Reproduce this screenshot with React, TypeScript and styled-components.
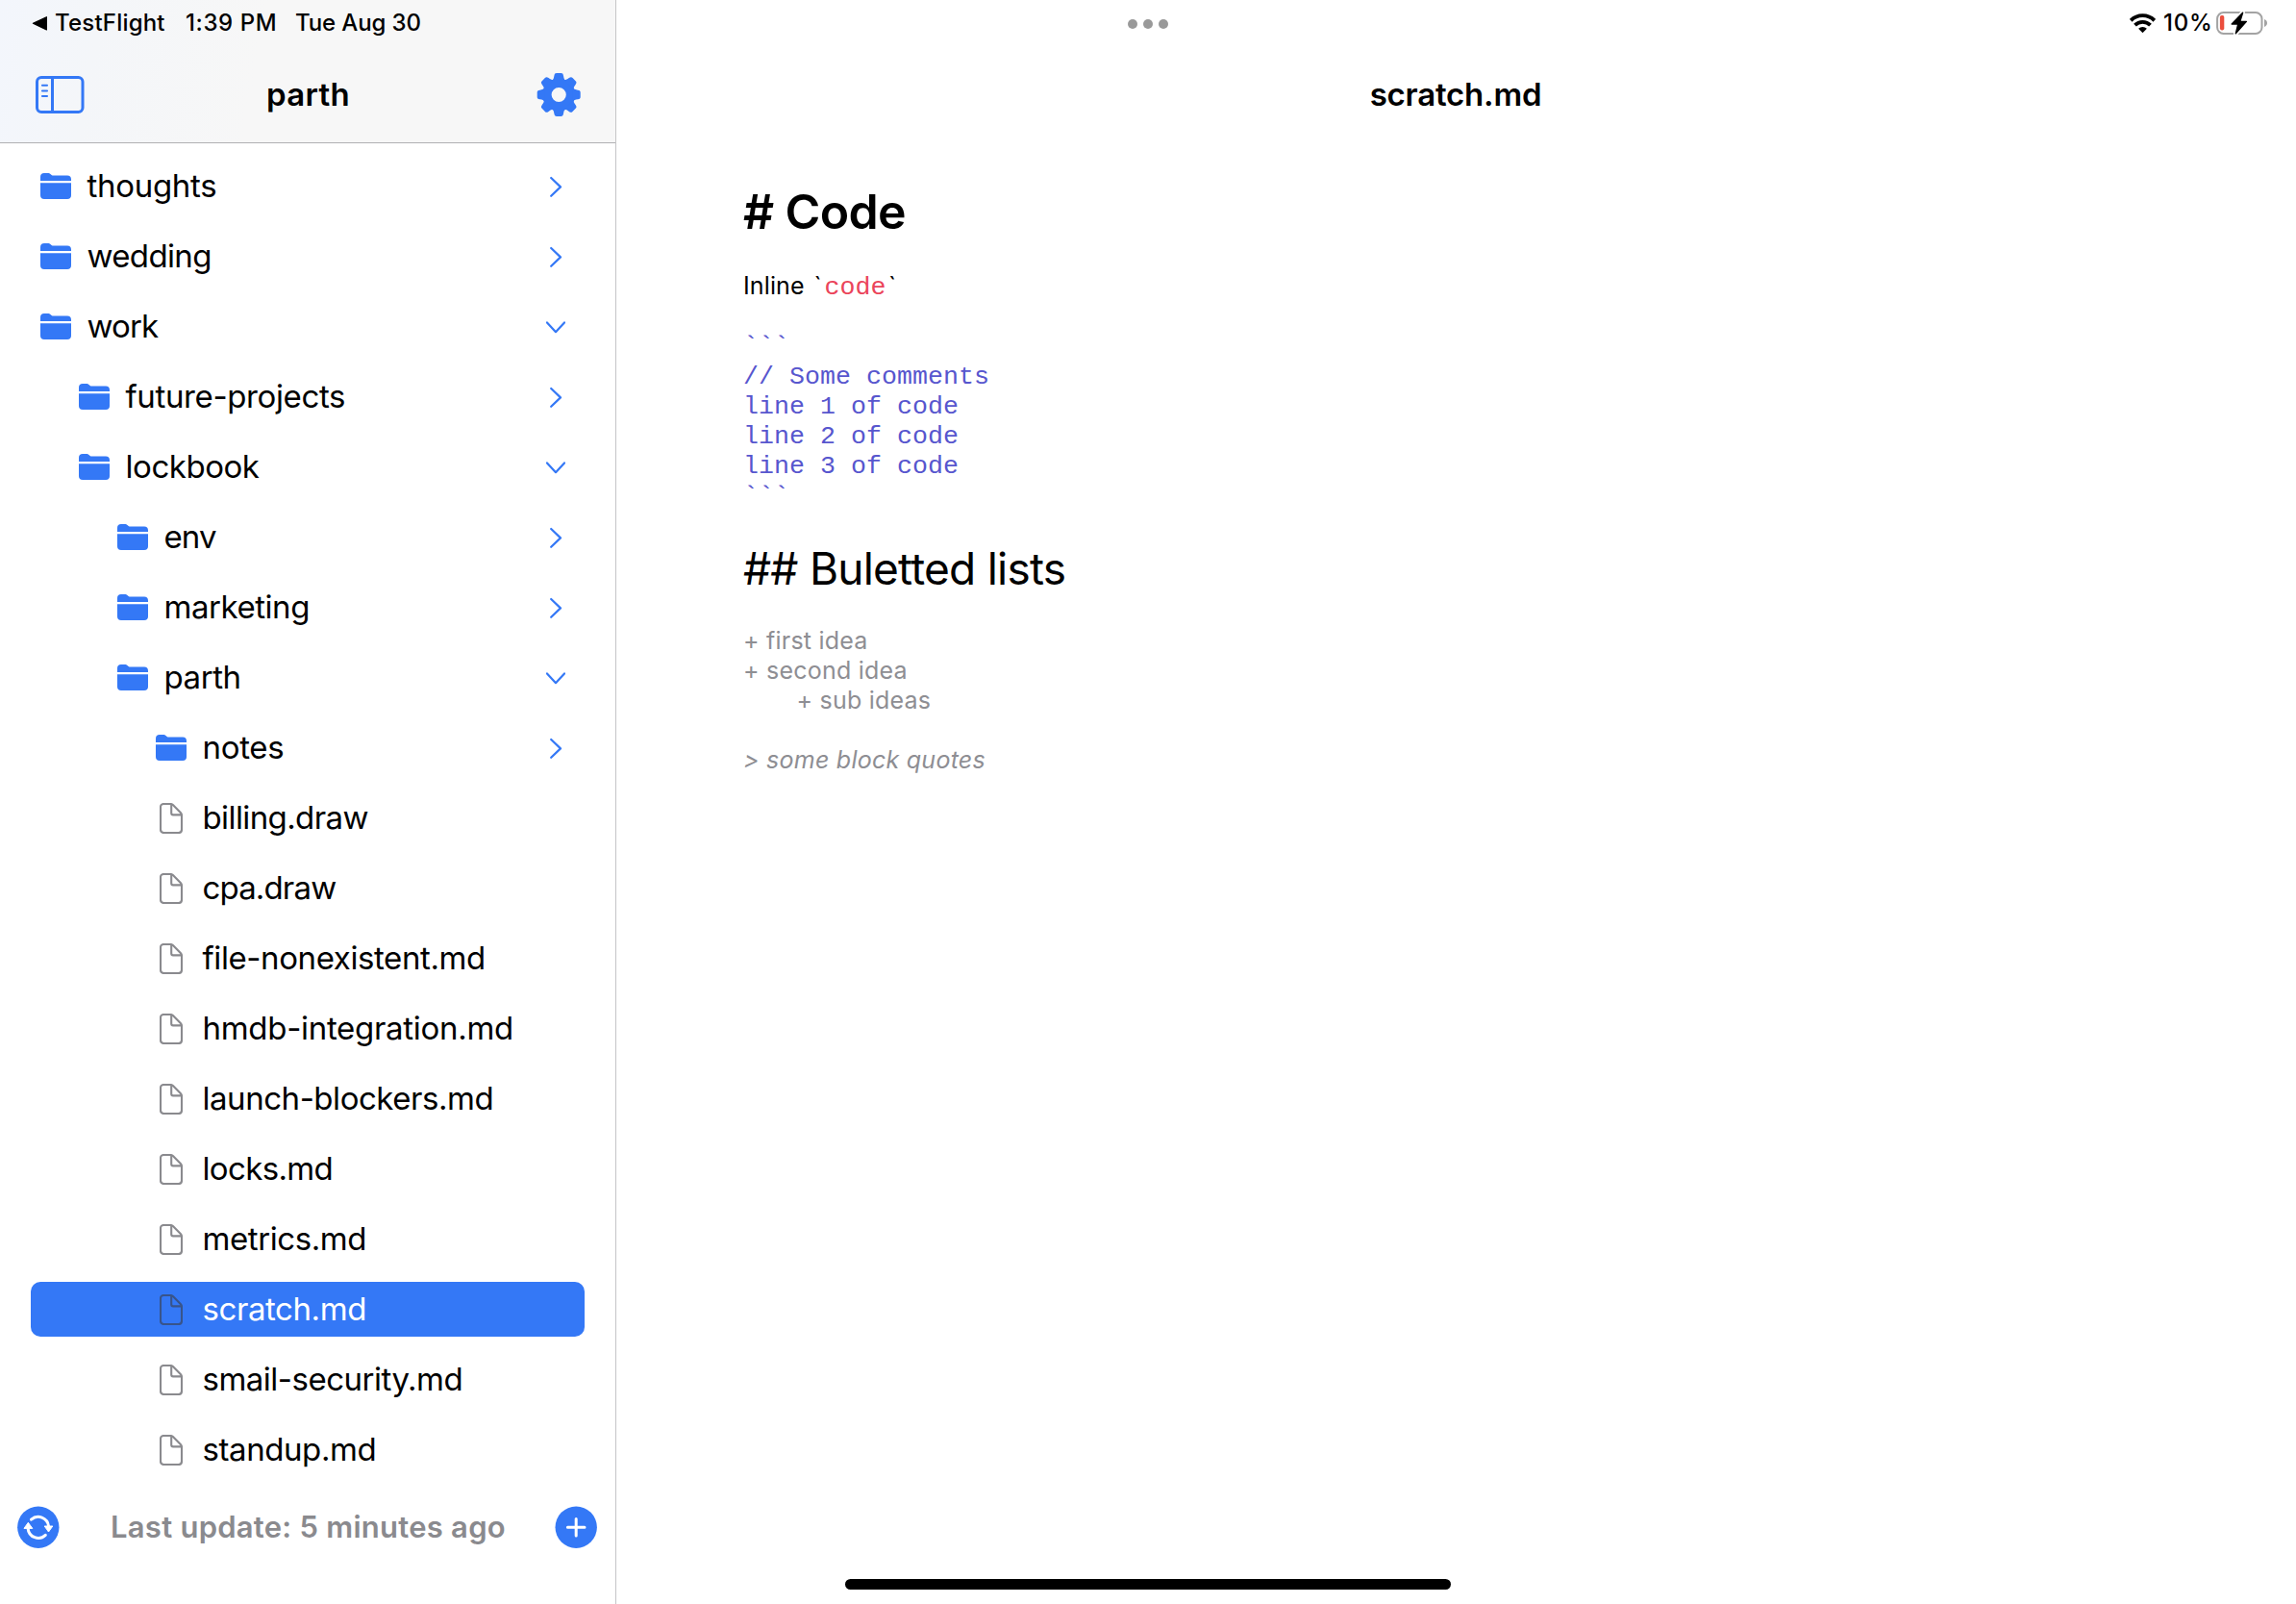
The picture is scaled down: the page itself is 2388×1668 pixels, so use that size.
import React from 'react';
import styled, { createGlobalStyle, css } from 'styled-components';

const BLUE = '#3478f6';
const SECONDARY = 'rgba(60, 60, 67, 0.6)';
const SANS = "Inter, 'Noto Sans', sans-serif";
const MONO = "'Liberation Mono', monospace";

const GlobalStyle = createGlobalStyle`
  * { box-sizing: border-box; }
  html, body { margin: 0; padding: 0; background: #fff; }
  body { font-family: ${SANS}; color: #000; overflow: hidden; }
  svg { display: block; flex: none; }
`;

const Screen = styled.div`
  position: relative;
  display: grid;
  grid-template-columns: 641px 1fr;
  width: 2388px;
  height: 1668px;
  background: #fff;
`;

const Sidebar = styled.aside`
  display: flex;
  flex-direction: column;
  border-right: 1px solid #c5c5c7;
`;

const SidebarHeader = styled.header`
  height: 149px;
  border-bottom: 1px solid #b1b1b3;
  background: linear-gradient(100deg, #f3f6fc 0%, #f4f6f9 16%, #f7f7f7 42%);
`;

const StatusBar = styled.div`
  display: flex;
  height: 48px;
  line-height: 47px;
  font-size: 24px;
  font-weight: 500;
  white-space: nowrap;
`;

const LeftStatus = styled(StatusBar)`
  padding-left: 33px;
`;

const BackArrow = styled.svg`
  margin-top: 16px;
  margin-right: 8px;
`;

const StatusText = styled.span<{ $spacing: number; $width?: number }>`
  letter-spacing: ${(p) => p.$spacing}px;
  ${(p) => p.$width && css`width: ${p.$width}px;`}
`;

const NavBar = styled.div`
  display: grid;
  grid-template-columns: 1fr auto 1fr;
  align-items: center;
  height: 100px;
  padding: 0 36px 0 37px;
`;

const NavEnd = styled.div`
  justify-self: end;
`;

const Title = styled.h1<{ $spacing: number }>`
  margin: 0;
  font-size: 33px;
  font-weight: 600;
  line-height: 100px;
  letter-spacing: ${(p) => p.$spacing}px;
  text-align: center;
`;

const DocumentTitle = styled(Title)`
  padding-right: 1px;
`;

const Tree = styled.ul`
  display: flex;
  flex-direction: column;
  flex: 1;
  gap: 16px;
  margin: 0;
  padding: 16px 32px 0;
  list-style: none;
`;

const TreeRow = styled.li<{ $level: number; $selected: boolean }>`
  display: flex;
  align-items: center;
  height: 57px;
  padding-left: ${(p) => 10 + p.$level * 40}px;
  padding-right: 20px;
  border-radius: 10px;
  color: ${(p) => (p.$selected ? '#fff' : '#000')};
  background: ${(p) => (p.$selected ? BLUE : 'transparent')};
`;

const IconSlot = styled.span`
  display: flex;
  justify-content: center;
  width: 32px;
  margin-right: 16.5px;
`;

const RowName = styled.span<{ $spacing: number }>`
  flex: 1;
  align-self: flex-start;
  font-size: 33px;
  line-height: 56px;
  letter-spacing: ${(p) => p.$spacing}px;
  white-space: nowrap;
`;

const Footer = styled.footer`
  display: flex;
  justify-content: space-between;
  align-items: flex-start;
  height: 102px;
  padding: 0 19px 0 18px;
`;

const UpdateText = styled.span`
  padding-left: 2px;
  font-size: 31px;
  font-weight: 600;
  line-height: 43px;
  letter-spacing: 0.25px;
  color: #8a8a8e;
`;

const Main = styled.main`
  display: flex;
  flex-direction: column;
`;

const MainStatus = styled(StatusBar)`
  justify-content: space-between;
  padding: 0 30px 0 532px;
`;

const Dots = styled.div`
  display: flex;
  gap: 6px;
  padding-top: 20px;
`;

const Dot = styled.span`
  width: 10px;
  height: 10px;
  border-radius: 50%;
  background: #999;
`;

const DeviceStatus = styled.div`
  display: flex;
`;

const WifiGlyph = styled.svg`
  margin: 14px 8px 0 0;
`;

const BatteryGlyph = styled.svg`
  margin-top: 12px;
`;

const Editor = styled.article`
  padding: 42px 132px 0;
  white-space: pre;
`;

const Heading1 = styled.h2`
  margin: 0;
  font-size: 50px;
  font-weight: 600;
  line-height: 60px;
  letter-spacing: -0.65px;
`;

const Paragraph = styled.p`
  margin: 32px 0 0;
  font-size: 25px;
  line-height: 30px;
  letter-spacing: 0.13px;
`;

const Tick = styled.span`
  padding: 0 3px 0 2.5px;
`;

const InlineCode = styled.code`
  font-family: ${MONO};
  font-size: 26.6px;
  line-height: 1;
  letter-spacing: 0;
  color: #eb445a;
`;

const CodeBlock = styled.pre`
  margin: 32px 0 0;
  height: 187px;
  font-family: ${MONO};
  font-size: 26.6px;
  line-height: 31.2px;
  letter-spacing: 0.04px;
  color: #5756ce;
`;

const Fence = styled.div<{ $after?: number }>`
  margin-bottom: ${(p) => p.$after ?? 0}px;
`;

const Heading2 = styled.h3`
  margin: 31px 0 0;
  font-size: 46px;
  font-weight: 400;
  line-height: 56px;
  letter-spacing: -0.77px;
`;

const Ideas = styled.ul`
  margin: 32px 0 0;
  padding: 0;
  list-style: none;
  font-size: 25px;
  line-height: 31px;
  letter-spacing: 0.22px;
  color: #8e8e93;
`;

const Idea = styled.li<{ $nested?: boolean }>`
  padding-left: ${(p) => (p.$nested ? 55.5 : 0)}px;
`;

const Quote = styled.blockquote`
  margin: 31px 0 0;
  font-size: 25px;
  font-style: italic;
  line-height: 31px;
  letter-spacing: 0.25px;
  color: #8e8e93;
`;

const HomeIndicator = styled.div`
  position: absolute;
  left: 879px;
  bottom: 15px;
  width: 630px;
  height: 11px;
  border-radius: 6px;
  background: #000;
`;

const FolderIcon = () => (
  <svg width="32" height="27" viewBox="0 0 32 27" fill={BLUE}>
    <path d="M0 8V4C0 1.4 1.4 0 4 0H7.6C9 0 9.8.3 10.8 1.2L11.6 1.9C12.2 2.4 12.7 2.6 13.6 2.6H28C30.6 2.6 32 4 32 6.4V8Z" />
    <path d="M0 10.3H32V23C32 25.6 30.6 27 28 27H4C1.4 27 0 25.6 0 23Z" />
  </svg>
);

const FileIcon = () => (
  <svg width="24" height="32" viewBox="0 0 24 32" fill="none" stroke={SECONDARY} strokeWidth="2.1" strokeLinejoin="round">
    <path d="M4.2 1H11.4C12.5 1 13.2 1.3 13.9 2L22 10.3C22.7 11 23 11.7 23 12.8V27.6C23 29.8 21.9 31 19.7 31H4.3C2.1 31 1 29.8 1 27.6V4.4C1 2.2 2.1 1 4.2 1ZM12.2 1.4V10.6C12.2 11.8 12.7 12.4 14 12.4H22.6" />
  </svg>
);

const Chevron = ({ open }: { open: boolean }) => (
  <svg width="20" height="22" viewBox="0 0 20 22" fill="none" stroke={BLUE} strokeWidth="2.2" strokeLinecap="round" strokeLinejoin="round">
    <path d={open ? 'M1 6.4L10 16.2L19 6.4' : 'M5.2 2L15 11.4L5.2 20.8'} />
  </svg>
);

const SidebarIcon = () => (
  <svg width="51" height="40" viewBox="0 0 51 40" fill="none" stroke={BLUE} strokeWidth="3">
    <rect x="1.5" y="2.5" width="47.5" height="36" rx="4.5" />
    <path d="M17.5 2.5V38.5" />
    <path d="M7 10.8H12M7 16.5H12M7 22H12" strokeWidth="2.1" strokeLinecap="round" />
  </svg>
);

const GearIcon = () => (
  <svg width="46" height="46" viewBox="0 0 46 46" fill={BLUE}>
    <g transform="translate(23.2 23.5)">
      <circle r="12.2" fill="none" stroke={BLUE} strokeWidth="9.2" />
      {[0, 45, 90, 135, 180, 225, 270, 315].map((a) => (
        <path
          key={a}
          transform={`rotate(${a})`}
          d="M-7.2 -14.6C-5.6 -15.8 -5.3 -17 -4.8 -19.8C-4.4 -21.8 -3.9 -22.5 -2.2 -22.5H2.2C3.9 -22.5 4.4 -21.8 4.8 -19.8C5.3 -17 5.6 -15.8 7.2 -14.6Z"
        />
      ))}
    </g>
  </svg>
);

const SyncIcon = () => (
  <svg width="44" height="44" viewBox="0 0 44 44">
    <circle cx="21.8" cy="22.2" r="21.7" fill={BLUE} />
    <g fill="none" stroke="#fff" strokeWidth="3" strokeLinecap="round">
      <path d="M14.5 14.2A10.8 10.8 0 0 1 32.5 21" />
      <path d="M29.3 30.4A10.8 10.8 0 0 1 11.1 23.5" />
    </g>
    <g fill="#fff" stroke="#fff" strokeWidth="1" strokeLinejoin="round">
      <path d="M28.2 21H36.8L32.5 27Z" />
      <path d="M7 23.4H15.8L11.3 17.3Z" />
    </g>
  </svg>
);

const AddIcon = () => (
  <svg width="44" height="44" viewBox="0 0 44 44">
    <circle cx="22.2" cy="22.2" r="21.7" fill={BLUE} />
    <path d="M22.2 13.4V31M13.4 22.2H31" stroke="#fff" strokeWidth="3" strokeLinecap="round" />
  </svg>
);

const BOLT = 'M27.6 1.2L16.2 13H22.8L20.3 22.9L31.4 10.4H24.8Z';

type Entry = {
  name: string;
  level: number;
  kind: 'open' | 'closed' | 'file';
  spacing?: number;
  selected?: boolean;
};

const entries: Entry[] = [
  { name: 'thoughts', level: 0, kind: 'closed', spacing: -0.3 },
  { name: 'wedding', level: 0, kind: 'closed', spacing: -0.65 },
  { name: 'work', level: 0, kind: 'open', spacing: -0.9 },
  { name: 'future-projects', level: 1, kind: 'closed', spacing: -0.37 },
  { name: 'lockbook', level: 1, kind: 'open', spacing: -0.45 },
  { name: 'env', level: 2, kind: 'closed', spacing: -0.9 },
  { name: 'marketing', level: 2, kind: 'closed', spacing: -0.45 },
  { name: 'parth', level: 2, kind: 'open' },
  { name: 'notes', level: 3, kind: 'closed', spacing: -0.3 },
  { name: 'billing.draw', level: 3, kind: 'file', spacing: -0.6 },
  { name: 'cpa.draw', level: 3, kind: 'file', spacing: -0.85 },
  { name: 'file-nonexistent.md', level: 3, kind: 'file', spacing: -0.4 },
  { name: 'hmdb-integration.md', level: 3, kind: 'file', spacing: -0.3 },
  { name: 'launch-blockers.md', level: 3, kind: 'file', spacing: -0.46 },
  { name: 'locks.md', level: 3, kind: 'file', spacing: -0.65 },
  { name: 'metrics.md', level: 3, kind: 'file' },
  { name: 'scratch.md', level: 3, kind: 'file', selected: true },
  { name: 'smail-security.md', level: 3, kind: 'file', spacing: -0.5 },
  { name: 'standup.md', level: 3, kind: 'file' },
];

export default function App() {
  return (
    <>
      <GlobalStyle />
      <Screen>
        <Sidebar>
          <SidebarHeader>
            <LeftStatus>
              <BackArrow width="16" height="16" viewBox="0 0 16 16">
                <path d="M1.4 8.3L15.4 1.7V14.9Z" stroke="#000" strokeWidth="1.2" strokeLinejoin="round" />
              </BackArrow>
              <StatusText $spacing={0.2} $width={136}>TestFlight</StatusText>
              <StatusText $spacing={0.6} $width={114}>1:39 PM</StatusText>
              <StatusText $spacing={-0.12}>Tue Aug 30</StatusText>
            </LeftStatus>
            <NavBar>
              <SidebarIcon />
              <Title $spacing={0.28}>parth</Title>
              <NavEnd>
                <GearIcon />
              </NavEnd>
            </NavBar>
          </SidebarHeader>
          <Tree>
            {entries.map((e) => (
              <TreeRow key={e.name + e.level} $level={e.level} $selected={!!e.selected}>
                <IconSlot>{e.kind === 'file' ? <FileIcon /> : <FolderIcon />}</IconSlot>
                <RowName $spacing={e.spacing ?? -0.42}>{e.name}</RowName>
                {e.kind !== 'file' && <Chevron open={e.kind === 'open'} />}
              </TreeRow>
            ))}
          </Tree>
          <Footer>
            <SyncIcon />
            <UpdateText>Last update: 5 minutes ago</UpdateText>
            <AddIcon />
          </Footer>
        </Sidebar>
        <Main>
          <MainStatus>
            <Dots>
              <Dot />
              <Dot />
              <Dot />
            </Dots>
            <DeviceStatus>
              <WifiGlyph width="27" height="20" viewBox="0 0 27 20">
                <g fill="none" stroke="#000" strokeWidth="3.8">
                  <path d="M1.2 7.3A17.3 17.3 0 0 1 25.8 7.3" />
                  <path d="M5.5 12.2A11.3 11.3 0 0 1 21.5 12.2" />
                </g>
                <path d="M13.5 20.2L9.1 15.8A6.2 6.2 0 0 1 17.9 15.8Z" />
              </WifiGlyph>
              <StatusText $spacing={0.77} $width={55}>10%</StatusText>
              <BatteryGlyph width="53" height="24" viewBox="0 0 53 24">
                <rect x="1.1" y="1.1" width="46.4" height="21.8" rx="6.5" fill="none" stroke="#a3a3a3" strokeWidth="2" />
                <path d="M50 8C52 8.8 53 10.2 53 12S52 15.2 50 16Z" fill="#a3a3a3" />
                <rect x="3.9" y="4" width="4.4" height="15.4" rx="1.8" fill="#eb4e3d" />
                <path d={BOLT} stroke="#fff" strokeWidth="4.6" strokeLinejoin="round" />
                <path d={BOLT} stroke="#000" strokeWidth="1.4" strokeLinejoin="round" />
              </BatteryGlyph>
            </DeviceStatus>
          </MainStatus>
          <DocumentTitle $spacing={-0.2}>scratch.md</DocumentTitle>
          <Editor>
            <Heading1># Code</Heading1>
            <Paragraph>
              {'Inline '}
              <Tick>`</Tick>
              <InlineCode>code</InlineCode>
              <Tick>`</Tick>
            </Paragraph>
            <CodeBlock>
              <Fence $after={0.8}>{'```'}</Fence>
              {'// Some comments\nline 1 of code\nline 2 of code\nline 3 of code'}
              <Fence>{'```'}</Fence>
            </CodeBlock>
            <Heading2>## Buletted lists</Heading2>
            <Ideas>
              <Idea>+ first idea</Idea>
              <Idea>+ second idea</Idea>
              <Idea $nested>+ sub ideas</Idea>
            </Ideas>
            <Quote>{'> some block quotes'}</Quote>
          </Editor>
        </Main>
        <HomeIndicator />
      </Screen>
    </>
  );
}
